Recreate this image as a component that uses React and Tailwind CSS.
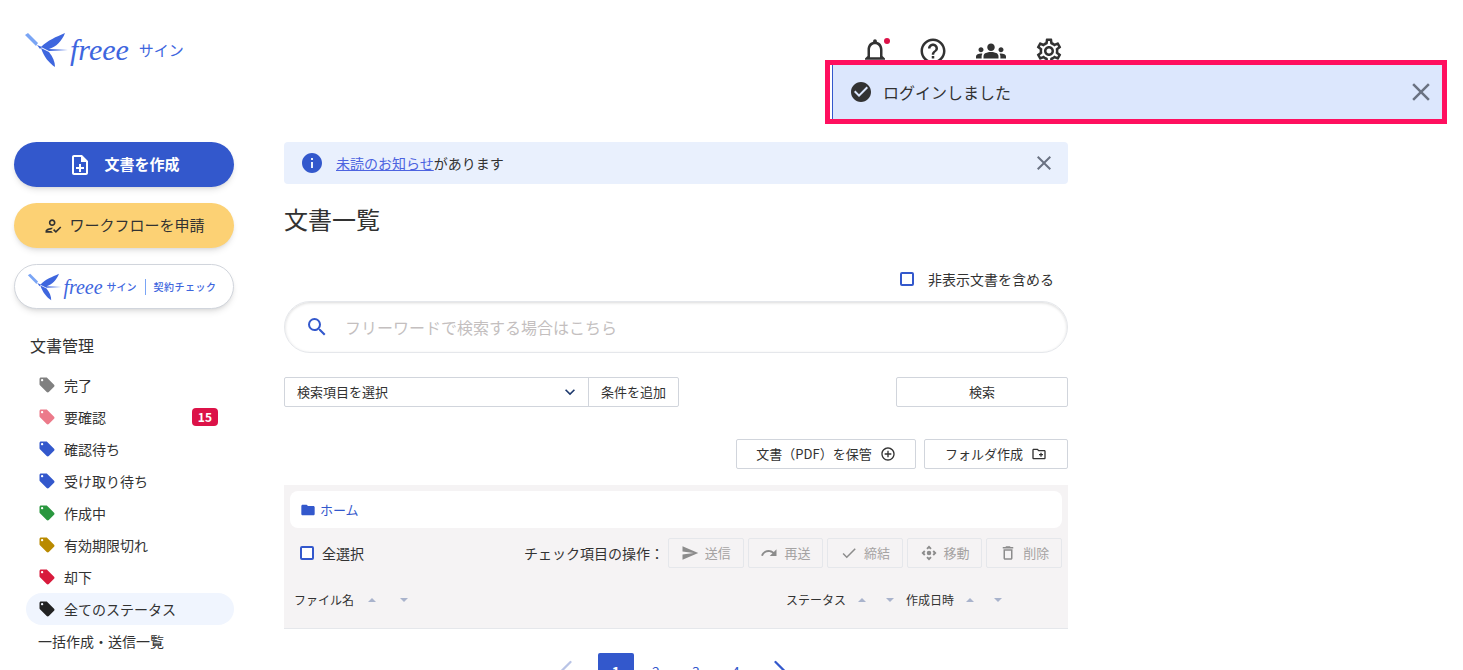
import React from "react";
import { ChevronLeft, ChevronRight } from "lucide-react";
import {
  MdCheck,
  MdCheckCircle,
  MdClose,
  MdControlCamera,
  MdDeleteOutline,
  MdExpandMore,
  MdFolder,
  MdGroups,
  MdHelpOutline,
  MdInfo,
  MdLocalOffer,
  MdOutlineAddCircleOutline,
  MdOutlineCreateNewFolder,
  MdOutlineHowToReg,
  MdOutlineNoteAdd,
  MdOutlineNotifications,
  MdOutlineSettings,
  MdRedo,
  MdSearch,
  MdSend,
} from "react-icons/md";

const statuses = [
  { label: "完了", color: "text-[#808080]" },
  { label: "要確認", color: "text-[#ec7a8a]", count: 15 },
  { label: "確認待ち", color: "text-[#3358cc]" },
  { label: "受け取り待ち", color: "text-[#3358cc]" },
  { label: "作成中", color: "text-[#2a973f]" },
  { label: "有効期限切れ", color: "text-[#b98a00]" },
  { label: "却下", color: "text-[#d81b3c]" },
  { label: "全てのステータス", color: "text-[#222222]", active: true },
];

const actions = [
  { label: "送信", Icon: MdSend },
  { label: "再送", Icon: MdRedo },
  { label: "締結", Icon: MdCheck },
  { label: "移動", Icon: MdControlCamera },
  { label: "削除", Icon: MdDeleteOutline },
];

function Bird({ className }) {
  return (
    <svg viewBox="0 0 46 36" className={className}>
      <path d="M1 3 L4 1 L14 11 L12 14 Z" fill="#7aa5f5" />
      <path d="M13 13 L18 15 L16 17 Z" fill="#3e66de" />
      <path d="M17 15 C24 8 32 5 41 1 C38 9 32 15 25 17 L44 18 L25 19 Z" fill="#3e66de" />
      <path d="M17 16 L25 20 C29 25 31 30 31 35 C25 31 20 25 17 16 Z" fill="#3e66de" />
    </svg>
  );
}

function Logo() {
  return (
    <div className="flex items-center text-[#3e66de]">
      <Bird className="h-9 w-11.5" />
      <span className="font-['Liberation_Serif'] text-3xl italic leading-none">freee</span>
      <span className="ml-2.5 text-[15px]">サイン</span>
    </div>
  );
}

function SortArrows({ wide }) {
  return (
    <div className={`flex items-center ${wide ? "ml-3.5 gap-6" : "ml-3 gap-5"}`}>
      <span className="h-0 w-0 border-x-4 border-b-4 border-x-transparent border-b-[#a9b3cc]" />
      <span className="h-0 w-0 border-x-4 border-t-4 border-x-transparent border-t-[#a9b3cc]" />
    </div>
  );
}

function Sidebar() {
  return (
    <aside className="w-[284px] shrink-0 pl-3.5 pr-12.5">
      <button className="flex h-11.25 w-full items-center justify-center gap-3 rounded-full bg-[#3358cc] text-[15px] font-bold text-white shadow-md">
        <MdOutlineNoteAdd className="text-2xl" />
        文書を作成
      </button>
      <button className="mt-4 flex h-11.25 w-full items-center justify-center gap-1.5 rounded-full bg-[#fcd174] text-[15px] text-[#323232] shadow-md">
        <MdOutlineHowToReg className="text-xl" />
        ワークフローを申請
      </button>
      <button className="mt-4 flex h-11.25 w-full items-center justify-center rounded-full border border-gray-300 bg-white pr-1 text-[#3e66de] shadow-md">
        <Bird className="h-7 w-9" />
        <span className="font-['Liberation_Serif'] text-xl italic leading-none">freee</span>
        <span className="ml-1 text-[10px] font-medium">サイン</span>
        <span className="mx-2 h-4 border-l border-[#7aa5f5]" />
        <span className="text-[10px] font-medium tracking-wider">契約チェック</span>
      </button>

      <h2 className="mt-6 pl-4 text-base leading-6 text-[#323232]">文書管理</h2>

      <ul className="mt-3 text-sm text-[#323232]">
        {statuses.map((s) => (
          <li
            key={s.label}
            className={`ml-3 flex h-8 items-center rounded-full pl-3 pr-4 ${s.active ? "bg-[#f0f5fe]" : ""}`}
          >
            <MdLocalOffer className={`mr-2 text-lg ${s.color}`} />
            <span>{s.label}</span>
            {s.count && (
              <span className="ml-auto rounded-sm bg-[#dc1248] px-1.5 text-xs font-bold leading-4.5 text-white">
                {s.count}
              </span>
            )}
          </li>
        ))}
        <li className="ml-3 flex h-8 items-center pl-3 text-sm">一括作成・送信一覧</li>
      </ul>
    </aside>
  );
}

function Main() {
  return (
    <main className="w-[784px] shrink-0 text-[#323232]">
      <div className="flex h-10.5 items-center rounded-sm bg-[#e9f0fd] px-4 text-sm">
        <MdInfo className="mr-3 text-2xl text-[#3358cc]" />
        <a href="#" className="text-[#4c63e0] underline">未読のお知らせ</a>
        <span>があります</span>
        <MdClose className="ml-auto -mr-1 text-2xl text-gray-500" />
      </div>

      <h1 className="mt-4 text-2xl leading-9.5">文書一覧</h1>

      <label className="mt-7.5 flex items-center justify-end gap-3.5 pr-3.5 text-sm leading-5.5">
        <span className="h-3.5 w-3.5 rounded-xs border-2 border-[#3358cc] bg-white" />
        非表示文書を含める
      </label>

      <div className="mt-2.75 flex h-13 items-center rounded-full border border-gray-200 px-5 shadow-[inset_0_1px_3px_rgba(0,0,0,0.15)]">
        <MdSearch className="text-2xl text-[#3358cc]" />
        <span className="ml-4 text-base text-[#c4bfbf]">フリーワードで検索する場合はこちら</span>
      </div>

      <div className="mt-6 flex h-7.5 justify-between text-[13px]">
        <div className="flex rounded-xs border border-gray-300">
          <div className="flex w-76 items-center justify-between border-r border-gray-300 pl-3 pr-2">
            検索項目を選択
            <MdExpandMore className="text-xl text-[#1e3a6e]" />
          </div>
          <div className="flex items-center px-3">条件を追加</div>
        </div>
        <button className="w-43 rounded-xs border border-gray-300">検索</button>
      </div>

      <div className="mt-8 flex h-7.5 justify-end gap-2 text-[13px]">
        <button className="flex w-45 items-center justify-center gap-2 rounded-xs border border-gray-300">
          文書（PDF）を保管
          <MdOutlineAddCircleOutline className="text-base" />
        </button>
        <button className="flex w-36 items-center justify-center gap-2 rounded-xs border border-gray-300">
          フォルダ作成
          <MdOutlineCreateNewFolder className="text-base" />
        </button>
      </div>

      <section className="mt-4 border-b border-gray-200 bg-[#f5f3f4]">
        <div className="px-1.5 pt-1.5">
          <div className="flex h-9.25 items-center gap-1 rounded-lg bg-white px-2.5 text-[13px] text-[#3358cc]">
            <MdFolder className="text-base" />
            ホーム
          </div>
          <div className="mt-2.5 flex h-7.5 items-center text-sm">
            <span className="ml-2.5 h-3.5 w-3.5 rounded-xs border-2 border-[#3358cc] bg-white" />
            <span className="ml-2">全選択</span>
            <span className="ml-auto mr-1">チェック項目の操作：</span>
            <div className="grid w-98.5 grid-cols-5 gap-1">
              {actions.map(({ label, Icon }) => (
                <button
                  key={label}
                  className="flex h-7.5 items-center justify-center gap-1.5 rounded-xs border border-gray-200 text-[13px] text-[#a5a3a3]"
                >
                  <Icon className="text-lg text-[#8c8c8c]" />
                  {label}
                </button>
              ))}
            </div>
          </div>
        </div>
        <div className="mt-3 flex h-12 items-start pl-2.5 pt-2.5 text-xs leading-5">
          <div className="flex w-123 items-center">
            ファイル名
            <SortArrows wide />
          </div>
          <div className="flex w-30 items-center">
            ステータス
            <SortArrows />
          </div>
          <div className="flex items-center">
            作成日時
            <SortArrows />
          </div>
        </div>
      </section>

      <nav className="mt-6 flex items-center justify-center gap-1 pr-1.5 text-sm text-[#3358cc]">
        <ChevronLeft strokeWidth={1.5} className="mr-2.5 h-9 w-9 text-[#b9c4e6]" />
        <span className="flex h-9 w-9 items-center justify-center rounded-xs bg-[#3358cc] font-bold text-white">1</span>
        <span className="flex h-9 w-9 items-center justify-center">2</span>
        <span className="flex h-9 w-9 items-center justify-center">3</span>
        <span className="flex h-9 w-9 items-center justify-center">4</span>
        <ChevronRight strokeWidth={1.5} className="ml-1 h-9 w-9" />
      </nav>
    </main>
  );
}

export default function App() {
  return (
    <div className="relative h-screen overflow-hidden bg-white font-['Noto_Sans_CJK_JP','Noto_Sans',sans-serif]">
      <header className="flex h-[142px]">
        <div className="w-[284px] shrink-0 pl-6 pt-8">
          <Logo />
        </div>
        <div className="flex w-[784px] shrink-0 items-start justify-end gap-7 pr-1 pt-9 text-[#323232]">
          <div className="relative">
            <MdOutlineNotifications className="text-3xl" />
            <span className="absolute right-0 top-0.5 h-1.5 w-1.5 rounded-full bg-[#dc1248]" />
          </div>
          <MdHelpOutline className="text-3xl" />
          <MdGroups className="text-3xl" />
          <MdOutlineSettings className="text-3xl" />
        </div>
      </header>

      <div className="flex">
        <Sidebar />
        <Main />
      </div>

      <div className="absolute left-[825px] top-[60px] flex h-16 w-[622px] items-center border-[5px] border-[#ff0f5f]">
        <div className="ml-0.5 flex h-full w-full items-center border-l border-[#3358cc] bg-[#dce7fd] px-4 text-base text-[#323232]">
          <MdCheckCircle className="mr-2.5 text-2xl" />
          ログインしました
          <MdClose className="ml-auto -mr-2.5 text-3xl text-gray-500" />
        </div>
      </div>
    </div>
  );
}
